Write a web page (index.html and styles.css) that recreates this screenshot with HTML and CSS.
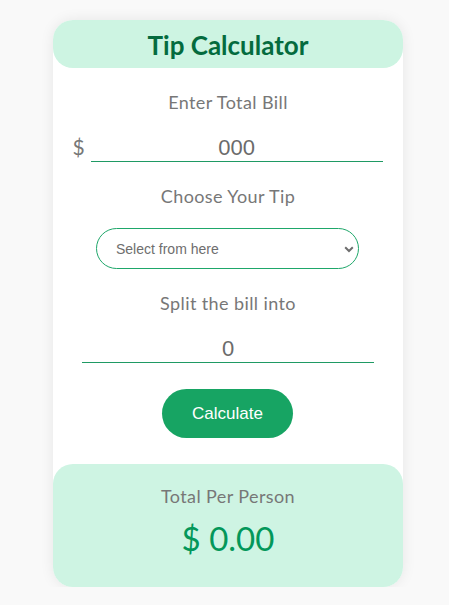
FILE: index.html
```html
<!DOCTYPE html>
<html>
<head>
<meta charset="utf-8">
<title>Tip Calculator</title>
<link rel="stylesheet" href="styles.css">
</head>
<body>
<div class="card">
  <header class="head"><h1 class="title">Tip Calculator</h1></header>
  <main class="form">
    <p class="label label-bill">Enter Total Bill</p>
    <div class="bill-row">
      <span class="cur">$</span>
      <input class="line-input" type="text" value="000">
    </div>
    <p class="label label-tip">Choose Your Tip</p>
    <div class="select">
      <span class="select-text">Select from here</span>
      <svg class="chev" width="10" height="7" viewBox="0 0 10 7"><path d="M1.2 1.3 L5 5 L8.8 1.3" fill="none" stroke="#6e6e6e" stroke-width="2"/></svg>
    </div>
    <p class="label label-split">Split the bill into</p>
    <input class="line-input split-input" type="text" value="0">
    <button class="btn">Calculate</button>
  </main>
  <section class="result">
    <p class="label result-label">Total Per Person</p>
    <p class="amount">$ 0.00</p>
  </section>
</div>
</body>
</html>
```
FILE: styles.css
```css
* { box-sizing: border-box; }
html, body { margin: 0; padding: 0; }
body {
  background: #f9f9f9;
  display: flex;
  justify-content: center;
  padding: 20px 0 0 7px;
  font-family: "Comic Sans MS", "Lato", sans-serif;
}
.card {
  width: 350px;
  background: #fff;
  border-radius: 20px;
  box-shadow: 0 0 14px rgba(0,0,0,0.08);
  display: flex;
  flex-direction: column;
}
.head {
  height: 48px;
  background: #cdf4e2;
  border-radius: 20px;
  display: flex;
  align-items: center;
  justify-content: center;
  padding-top: 2px;
}
.title {
  margin: 0;
  font-size: 26px;
  font-weight: 700;
  color: #046b3e;
  letter-spacing: 0;
}
.form {
  display: flex;
  flex-direction: column;
  align-items: center;
}
.label {
  margin: 0;
  font-size: 18px;
  line-height: 24px;
  color: #777;
  text-align: center;
  letter-spacing: 0.4px;
}
.label-bill { margin-top: 22px; }
.bill-row {
  margin-top: 17px;
  display: flex;
  align-items: flex-end;
  gap: 6px;
  margin-left: -1px;
}
.cur {
  font-size: 21px;
  color: #777;
  line-height: 30px;
  padding-bottom: 0;
}
.line-input {
  width: 292px;
  height: 31px;
  border: none;
  border-bottom: 1px solid #1f9a64;
  outline: none;
  background: transparent;
  text-align: center;
  font-family: "Liberation Sans", Arial, sans-serif;
  font-size: 22px;
  color: #6b6b6b;
  padding: 3px 0 0;
}
.label-tip { margin-top: 22px; }
.select {
  margin-top: 20px;
  width: 263px;
  height: 41px;
  border: 1px solid #1ea76a;
  border-radius: 21px;
  display: flex;
  align-items: center;
  justify-content: space-between;
  padding: 0 4px 0 19px;
  margin-left: -1px;
}
.select-text {
  font-family: "Liberation Sans", Arial, sans-serif;
  font-size: 14px;
  color: #6e6e6e;
}
.chev { margin-top: 1px; }
.label-split { margin-top: 22px; }
.split-input { margin-top: 17px; }
.btn {
  margin-top: 26px;
  width: 131px;
  height: 49px;
  border: none;
  border-radius: 25px;
  background: #17a463;
  color: #fff;
  font-family: "Liberation Sans", Arial, sans-serif;
  font-size: 17px;
  margin-left: -1px;
}
.result {
  margin-top: 26px;
  background: #cef4e3;
  border-radius: 20px;
  padding: 20px 0 29px;
  display: flex;
  flex-direction: column;
  align-items: center;
}
.amount {
  margin: 10px 0 0;
  font-size: 33px;
  line-height: 40px;
  color: #03975a;
}
```
